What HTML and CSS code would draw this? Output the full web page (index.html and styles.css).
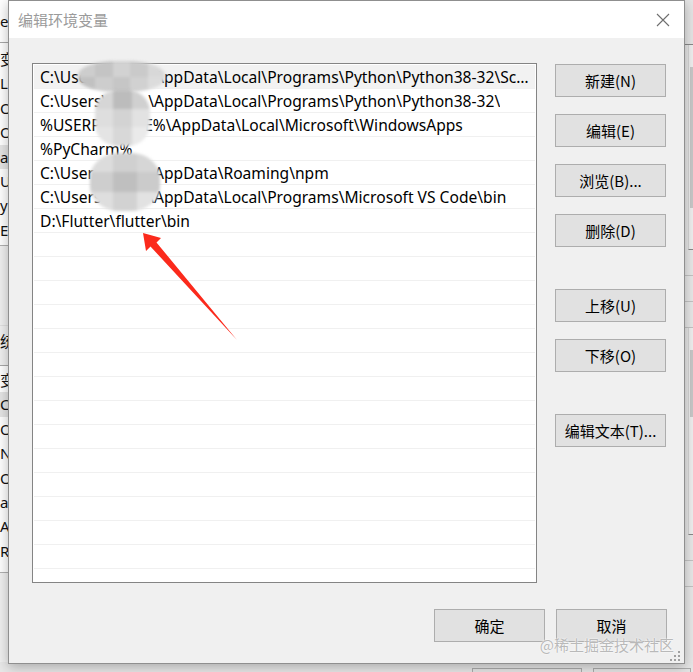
FILE: index.html
```html
<!DOCTYPE html>
<html lang="zh-CN">
<head>
<meta charset="utf-8">
<title>编辑环境变量</title>
<link rel="stylesheet" href="styles.css">
</head>
<body>
<div class="desk">
  <div class="bg-left">
    <div class="bgl-head">ee</div>
    <div class="bgl-rows">
      <div class="bgl-row">变量</div>
      <div class="bgl-row">LU</div>
      <div class="bgl-row">Or</div>
      <div class="bgl-row">Or</div>
      <div class="bgl-row sel">a</div>
      <div class="bgl-row">U</div>
      <div class="bgl-row">y</div>
      <div class="bgl-row">E</div>
    </div>
    <div class="bgl-gap"></div>
    <div class="bgl-head2">统</div>
    <div class="bgl-rows two">
      <div class="bgl-row">变量</div>
      <div class="bgl-row sel">Co</div>
      <div class="bgl-row">Or</div>
      <div class="bgl-row">NU</div>
      <div class="bgl-row">OS</div>
      <div class="bgl-row">a</div>
      <div class="bgl-row">A</div>
      <div class="bgl-row">R</div>
    </div>
  </div>
  <div class="bg-right">
    <div class="bgr-head"></div>
    <div class="bgr-pane"><div class="bgr-thumb"></div></div>
    <div class="bgr-line"></div>
    <div class="bgr-line"></div>
    <div class="bgr-line"></div>
    <div class="bgr-pane two"><div class="bgr-thumb"></div></div>
    <div class="bgr-line"></div>
    <div class="bgr-line"></div>
  </div>
  <div class="bg-bottom">
    <div class="bgb-btn first"></div>
    <div class="bgb-btn"></div>
  </div>

  <div class="dialog">
    <div class="titlebar">
      <span class="title">编辑环境变量</span>
      <svg class="close" width="14" height="14" viewBox="0 0 14 14"><path d="M1 1 L13 13 M13 1 L1 13" stroke="#6e6e6e" stroke-width="1.1" fill="none"/></svg>
    </div>
    <div class="body">
      <div class="main">
        <div class="list">
          <div class="row sel"><span>C:\Users\</span><span class="user">user</span><span>\AppData\Local\Programs\Python\Python38-32\Scripts\</span></div>
          <div class="row"><span>C:\Users\</span><span class="user">user</span><span>\AppData\Local\Programs\Python\Python38-32\</span></div>
          <div class="row"><span>%USERPROFILE%\AppData\Local\Microsoft\WindowsApps</span></div>
          <div class="row"><span>%PyCharm%</span></div>
          <div class="row"><span>C:\Users\</span><span class="user">user</span><span>\AppData\Roaming\npm</span></div>
          <div class="row"><span>C:\Users\</span><span class="user">user</span><span>\AppData\Local\Programs\Microsoft VS Code\bin</span></div>
          <div class="row"><span>D:\Flutter\flutter\bin</span></div>
          <div class="row"></div><div class="row"></div><div class="row"></div><div class="row"></div>
          <div class="row"></div><div class="row"></div><div class="row"></div><div class="row"></div>
          <div class="row"></div><div class="row"></div><div class="row"></div><div class="row"></div>
          <div class="row"></div><div class="row"></div><div class="row"></div>
        </div>
        <div class="side">
          <button class="btn">新建(N)</button>
          <button class="btn">编辑(E)</button>
          <button class="btn">浏览(B)...</button>
          <button class="btn">删除(D)</button>
          <button class="btn group">上移(U)</button>
          <button class="btn">下移(O)</button>
          <button class="btn group">编辑文本(T)...</button>
        </div>
      </div>
      <div class="footer">
        <button class="btn">确定</button>
        <button class="btn">取消</button>
      </div>
      <div class="watermark">@稀土掘金技术社区</div>
      <svg class="grip" width="10" height="10" viewBox="0 0 10 10">
        <rect x="8" y="0" width="2" height="2" fill="#a0a0a0"/>
        <rect x="4" y="4" width="2" height="2" fill="#a0a0a0"/>
        <rect x="8" y="4" width="2" height="2" fill="#a0a0a0"/>
        <rect x="0" y="8" width="2" height="2" fill="#a0a0a0"/>
        <rect x="4" y="8" width="2" height="2" fill="#a0a0a0"/>
        <rect x="8" y="8" width="2" height="2" fill="#a0a0a0"/>
      </svg>
    </div>
  </div>

  <div class="blob blob-a">
    <i style="background:#cdcdcd"></i><i style="background:#c4c4c4"></i><i style="background:#d2d2d2"></i><i style="background:#cacaca"></i><i style="background:#d8d8d8"></i>
    <i style="background:#c1c1c1"></i><i style="background:#cdcdcd"></i><i style="background:#c6c6c6"></i><i style="background:#d1d1d1"></i><i style="background:#dcdcdc"></i>
  </div>
  <div class="blob blob-b">
    <i style="background:#d6d6d6"></i><i style="background:#bcbcbc"></i><i style="background:#d0d0d0"></i>
    <i style="background:#dedede"></i><i style="background:#d3d3d3"></i><i style="background:#e2e2e2"></i>
    <i style="background:#e4e4e4"></i><i style="background:#d8d8d8"></i><i style="background:#eaeaea"></i>
  </div>
  <div class="blob blob-c">
    <i style="background:#dcdcdc"></i><i style="background:#d0d0d0"></i><i style="background:#d6d6d6"></i>
    <i style="background:#cecece"></i><i style="background:#bfbfbf"></i><i style="background:#cbcbcb"></i>
    <i style="background:#dedede"></i><i style="background:#d2d2d2"></i><i style="background:#e2e2e2"></i>
  </div>

  <svg class="arrow" width="693" height="672" viewBox="0 0 693 672">
    <polygon points="143,233 161,238 156.5,242.5 237,340 150.5,246.5 146,251" fill="#fb2a1c"/>
  </svg>
</div>
</body>
</html>
```

FILE: styles.css
```css
* { box-sizing: border-box; }
html, body { margin: 0; padding: 0; }
body { background: #ececec; font-family: "Noto Sans", "Noto Sans CJK SC", sans-serif; }

.desk { position: relative; width: 693px; height: 672px; overflow: hidden; background: #ebebeb; }

/* background windows */
.bg-left { position: absolute; left: 0; top: 0; width: 40px; height: 672px; background: #f0f0f0; font-size: 15px; color: #111; }
.bgl-head { height: 43px; background: #fff; border-bottom: 1px solid #a8a8a8; line-height: 43px; padding-left: 0; }
.bgl-rows { background: #fff; padding-top: 4px; height: 203px; border-bottom: 1px solid #b0b0b0; }
.bgl-row { height: 24.4px; line-height: 24px; white-space: nowrap; }
.bgl-row.sel { background: #e5e5e5; }
.bgl-gap { height: 80px; border-bottom: 1px solid #e0e0e0; }
.bgl-head2 { height: 40px; line-height: 30px; border-bottom: 1px solid #a8a8a8; }
.bgl-rows.two { height: 207px; padding-top: 2px; }

.bg-right { position: absolute; left: 660px; top: 0; width: 33px; height: 672px; background: #e9e9e9; }
.bgr-head { height: 45px; border-bottom: 1px solid #8a8a8a; background: #e6e6e6; }
.bgr-pane { height: 205px; border-left: 1px solid #d6d6d6; margin-left: 28px; position: relative; background: #f0f0f0; border-bottom: 1px solid #8a8a8a; }
.bgr-thumb { position: absolute; right: 0; top: 22px; width: 3px; height: 141px; background: #c9c9c9; }
.bgr-line { height: 26px; border-bottom: 1px solid #c4c4c4; }
.bgr-pane.two { height: 207px; }
.bgr-pane.two .bgr-thumb { top: 22px; height: 67px; }

.bg-bottom { position: absolute; left: 0; top: 662px; width: 693px; height: 10px; display: flex; gap: 11px; padding-left: 472px; padding-top: 6px; background: #e8e8e8; }
.bgb-btn { width: 110px; height: 20px; border: 1px solid #adadad; background: #e6e6e6; }
.bgb-btn + .bgb-btn { width: 98px; }

/* dialog window */
.dialog { position: absolute; left: 8px; top: 0; width: 677px; height: 664px; border: 1px solid #8f8f8f; background: #f0f0f0; box-shadow: 0 3px 12px rgba(0,0,0,0.28); display: flex; flex-direction: column; }
.titlebar { height: 37px; background: #fff; display: flex; align-items: center; justify-content: space-between; padding: 0 14px 0 9px; flex: none; }
.title { font-family: "Noto Sans CJK SC", sans-serif; font-size: 15px; color: #9b9b9b; }
.close { display: block; }

.body { position: relative; flex: 1; padding: 25px 17px 21px 23px; display: flex; flex-direction: column; }
.main { display: flex; gap: 18px; }

.list { width: 505px; height: 520px; border: 1px solid #848484; background: #fff; padding: 1px 1px 0; overflow: hidden; flex: none; }
.row { height: 24px; border-bottom: 1px solid #f0f0f0; display: flex; align-items: center; padding-left: 6px; padding-right: 3px; font-size: 15.6px; color: #000; white-space: nowrap; overflow: hidden; }
.row > span { flex: none; }
.row > span:last-child { flex: 0 1 auto; min-width: 0; overflow: hidden; text-overflow: ellipsis; }
.row.sel { background: #f2f2f2; }
.user { display: inline-block; width: 41px; overflow: hidden; }

.side { display: flex; flex-direction: column; gap: 17px; padding-top: 1px; }
.btn { width: 111px; height: 33px; border: 1px solid #adadad; background: #e1e1e1; font-family: "Noto Sans CJK SC", sans-serif; font-size: 15px; color: #000; padding: 0; margin: 0; }
.side .btn.group { margin-top: 25px; }

.footer { display: flex; justify-content: flex-end; gap: 11px; margin-top: 26px; }

.watermark { position: absolute; right: 10px; bottom: 8px; font-family: "Noto Sans CJK SC", sans-serif; font-size: 15px; color: #b9b9b9; text-shadow: 0 0 1px #fff, 0 0 2px #fff; letter-spacing: 0; }
.grip { position: absolute; right: 4px; bottom: 2px; }

/* privacy blur blobs over list */
.blob { position: absolute; display: grid; overflow: hidden; filter: blur(1.6px); border-radius: 45%; }
.blob i { display: block; }
.blob-a { left: 78px; top: 61px; width: 87px; height: 31px; grid-template-columns: repeat(5, 1fr); grid-template-rows: repeat(2, 1fr); }
.blob-b { left: 95px; top: 90px; width: 55px; height: 56px; grid-template-columns: repeat(3, 1fr); grid-template-rows: repeat(3, 1fr); border-radius: 40%; }
.blob-c { left: 90px; top: 153px; width: 70px; height: 58px; grid-template-columns: repeat(3, 1fr); grid-template-rows: repeat(3, 1fr); border-radius: 42%; }

.arrow { position: absolute; left: 0; top: 0; pointer-events: none; }
```
